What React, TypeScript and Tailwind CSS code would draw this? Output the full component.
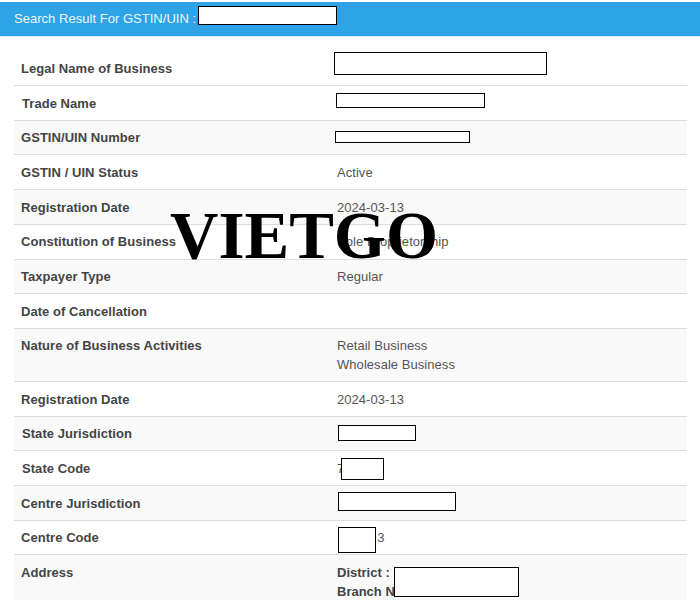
const rows: { label: string; value?: string[]; h: string; gray: boolean; lx?: string }[] = [
  { label: "Legal Name of Business", h: "h-[49px] pt-[22px]", gray: false },
  { label: "Trade Name", h: "h-[35px] pt-[8px]", gray: false, lx: "pl-[8px]" },
  { label: "GSTIN/UIN Number", h: "h-[34px] pt-[7px]", gray: true },
  { label: "GSTIN / UIN Status", value: ["Active"], h: "h-[35px] pt-[8px]", gray: false },
  { label: "Registration Date", value: ["2024-03-13"], h: "h-[35px] pt-[8px]", gray: true },
  { label: "Constitution of Business", value: ["Sole Proprietorship"], h: "h-[35px] pt-[7px]", gray: false },
  { label: "Taxpayer Type", value: ["Regular"], h: "h-[34px] pt-[7px]", gray: true },
  { label: "Date of Cancellation", h: "h-[35px] pt-[8px]", gray: false },
  { label: "Nature of Business Activities", value: ["Retail Business", "Wholesale Business"], h: "h-[53px] pt-[7px]", gray: true },
  { label: "Registration Date", value: ["2024-03-13"], h: "h-[35px] pt-[8px]", gray: false },
  { label: "State Jurisdiction", h: "h-[34px] pt-[7px]", gray: true, lx: "pl-[8px]" },
  { label: "State Code", value: ["7"], h: "h-[35px] pt-[8px]", gray: false, lx: "pl-[8px]" },
  { label: "Centre Jurisdiction", h: "h-[35px] pt-[8px]", gray: true },
  { label: "Centre Code", value: ["           3"], h: "h-[34px] pt-[7px]", gray: false },
];

const boxes = [
  "left-[198px] top-[6px] w-[139px] h-[19px]",
  "left-[334px] top-[52px] w-[213px] h-[23px]",
  "left-[336px] top-[93px] w-[149px] h-[15px]",
  "left-[335px] top-[131px] w-[135px] h-[12px]",
  "left-[338px] top-[425px] w-[78px] h-[16px]",
  "left-[341px] top-[458px] w-[43px] h-[22px]",
  "left-[338px] top-[492px] w-[118px] h-[19px]",
  "left-[338px] top-[527px] w-[38px] h-[26px]",
  "left-[394px] top-[567px] w-[125px] h-[30px]",
];

export default function App() {
  return (
    <div className="relative w-[700px] h-[600px] overflow-hidden bg-white font-['Liberation_Sans',Arial,sans-serif] text-[13px] leading-[19px] text-[#555]">
      <div className="mt-[2px] h-[35px] border-b border-[#d9edf7] bg-[#2ea3e6] pl-[14px] pt-[7px] text-[13px] leading-[19px] tracking-[0.03px] text-[#eef7fd]">
        Search Result For GSTIN/UIN :
      </div>
      <div className="ml-[14px] w-[673px]">
        {rows.map((r, i) => (
          <div key={i} className={`flex border-b border-[#ddd] ${r.h} ${r.gray ? "bg-[#f9f9f9]" : "bg-white"}`}>
            <div className={`w-[323px] font-bold tracking-[0.05px] text-[#444] ${r.lx ?? "pl-[7px]"}`}>{r.label}</div>
            <div className="whitespace-pre tracking-[0.05px] text-[#555]">
              {r.value?.map((v) => <div key={v}>{v}</div>)}
            </div>
          </div>
        ))}
        <div className="flex h-[50px] bg-[#f9f9f9] pt-[8px]">
          <div className="w-[323px] pl-[7px] font-bold tracking-[0.05px] text-[#444]">Address</div>
          <div className="font-bold text-[#444]">
            <div>District :</div>
            <div>Branch No</div>
          </div>
        </div>
      </div>
      {boxes.map((b) => (
        <div key={b} className={`absolute border border-black bg-white ${b}`} />
      ))}
      <div className="absolute left-[170px] top-[197px] font-['Liberation_Serif',serif] text-[67px] font-bold leading-[77px] text-black">
        VIETGO
      </div>
    </div>
  );
}
